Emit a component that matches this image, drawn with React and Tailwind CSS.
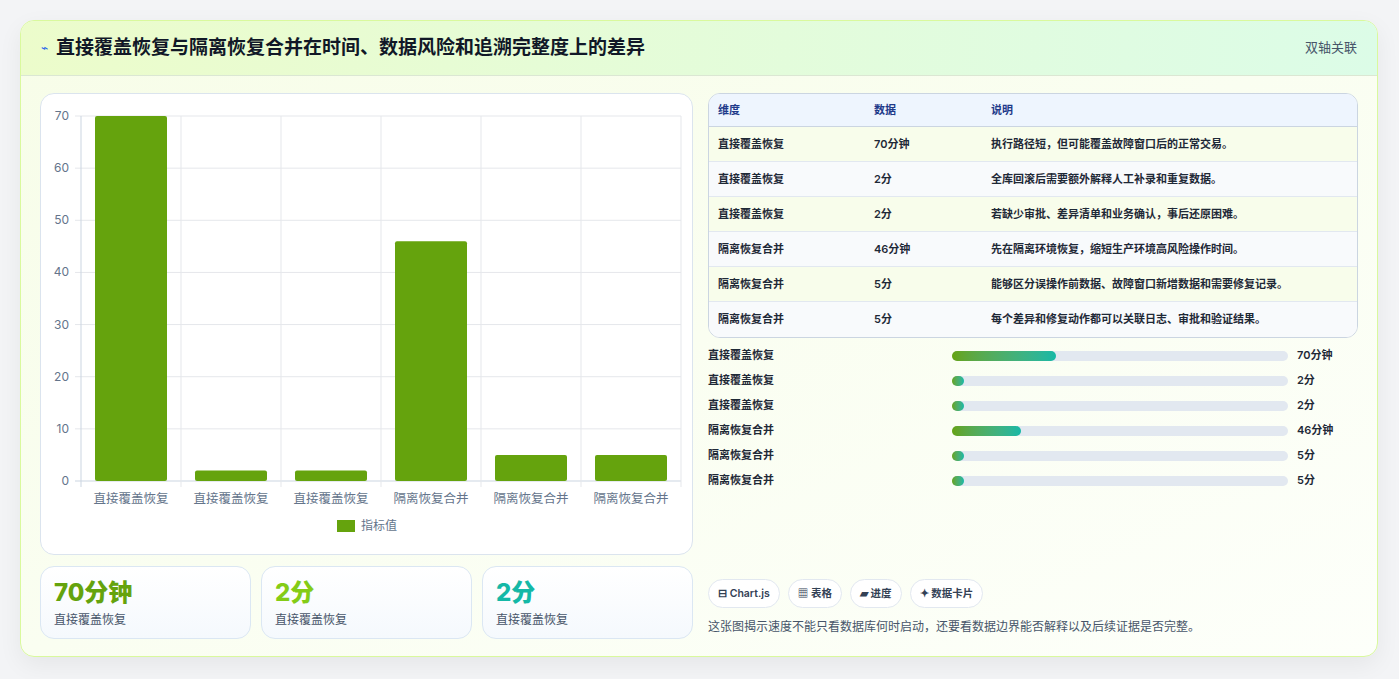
import React from "react";

const rows = [
  ["直接覆盖恢复", "70分钟", "执行路径短，但可能覆盖故障窗口后的正常交易。", 70],
  ["直接覆盖恢复", "2分", "全库回滚后需要额外解释人工补录和重复数据。", 2],
  ["直接覆盖恢复", "2分", "若缺少审批、差异清单和业务确认，事后还原困难。", 2],
  ["隔离恢复合并", "46分钟", "先在隔离环境恢复，缩短生产环境高风险操作时间。", 46],
  ["隔离恢复合并", "5分", "能够区分误操作前数据、故障窗口新增数据和需要修复记录。", 5],
  ["隔离恢复合并", "5分", "每个差异和修复动作都可以关联日志、审批和验证结果。", 5],
];

function Chart() {
  const x0 = 40, y0 = 22, h = 365, w = 600;
  const ticks = [0, 10, 20, 30, 40, 50, 60, 70];
  const yOf = (v) => y0 + h - (v / 70) * h;
  return (
    <svg width="652" height="460" className="block">
      {ticks.map((t) => (
        <g key={t}>
          <line x1={x0 - 6} x2={x0 + w} y1={yOf(t)} y2={yOf(t)} stroke={t === 0 ? "#cbd5e1" : "#e5e7eb"} />
          <text x={x0 - 12} y={yOf(t) + 4} textAnchor="end" fontSize="12" fill="#64748b">{t}</text>
        </g>
      ))}
      {[0, 1, 2, 3, 4, 5, 6].map((i) => (
        <line key={i} x1={x0 + i * 100} x2={x0 + i * 100} y1={y0} y2={y0 + h + 6} stroke={i === 0 ? "#cbd5e1" : "#e5e7eb"} />
      ))}
      {rows.map((r, i) => (
        <g key={i}>
          <rect x={x0 + i * 100 + 14} y={yOf(r[3])} width="72" height={(r[3] / 70) * h} rx="2" fill="#65a30d" />
          <text x={x0 + i * 100 + 50} y={y0 + h + 22} textAnchor="middle" fontSize="12.5" fill="#64748b">{r[0]}</text>
        </g>
      ))}
      <rect x="296" y="426" width="18" height="12" fill="#65a30d" />
      <text x="320" y="436" fontSize="12" fill="#64748b">指标值</text>
    </svg>
  );
}

export default function App() {
  const pct = { 70: 31, 46: 20.5, 2: 3.5, 5: 3.5 };
  return (
    <div className="w-[1399px] h-[679px] bg-[#f3f4f6] pt-[20px] pl-[20px]" style={{ fontFamily: "Inter, 'Noto Sans CJK SC', sans-serif" }}>
      <div className="w-[1358px] h-[637px] rounded-[14px] border border-[#d9f99d] bg-gradient-to-br from-[#f7fde8] to-[#fdfffa] shadow-[0_8px_24px_rgba(0,0,0,0.06)] overflow-hidden">
        <div className="h-[55px] flex items-center justify-between px-[20px] bg-gradient-to-r from-[#ecfccb] to-[#dcfce7] border-b border-[#dbe7d3]">
          <div className="flex items-center gap-[8px]">
            <span className="text-[#2563eb] text-[12px]">⌁</span>
            <span className="text-[19px] font-bold text-[#111827]">直接覆盖恢复与隔离恢复合并在时间、数据风险和追溯完整度上的差异</span>
          </div>
          <span className="text-[13px] text-[#475569]">双轴关联</span>
        </div>
        <div className="flex gap-[15px] px-[19px] pt-[17px]">
          <div className="w-[653px] flex flex-col gap-[11px]">
            <div className="h-[462px] rounded-[14px] border border-[#dbe4ee] bg-white">
              <Chart />
            </div>
            <div className="flex gap-[10px]">
              {[["70分钟", "text-[#65a30d]"], ["2分", "text-[#84cc16]"], ["2分", "text-[#14b8a6]"]].map(([v, c], i) => (
                <div key={i} className="flex-1 h-[73px] rounded-[14px] border border-[#dbe7f3] bg-gradient-to-b from-white to-[#f5f9fd] px-[13px] pt-[10px]">
                  <div className={`text-[24px] font-extrabold leading-[32px] ${c}`}>{v}</div>
                  <div className="text-[12px] text-[#475569] mt-[2px]">直接覆盖恢复</div>
                </div>
              ))}
            </div>
          </div>
          <div className="w-[653px] flex flex-col">
            <div className="rounded-[12px] border border-[#cbd5e1] overflow-hidden bg-white">
              <div className="h-[33px] flex items-center bg-[#eef5fe] border-b border-[#cbd5e1] text-[11px] font-semibold text-[#1e3a8a]">
                <span className="w-[165px] pl-[9px]">维度</span>
                <span className="w-[117px]">数据</span>
                <span>说明</span>
              </div>
              {rows.map((r, i) => (
                <div key={i} className={`h-[35px] flex items-center text-[11px] font-semibold text-[#1f2937] ${i < 5 ? "border-b border-[#e2e8f0]" : ""} ${i % 2 === 0 ? "bg-[#f8fdeb]" : "bg-[#f8fafc]"}`}>
                  <span className="w-[165px] pl-[9px]">{r[0]}</span>
                  <span className="w-[117px]">{r[1]}</span>
                  <span>{r[2]}</span>
                </div>
              ))}
            </div>
            <div className="mt-[5px] flex flex-col">
              {rows.map((r, i) => (
                <div key={i} className="h-[25px] flex items-center text-[11px] font-semibold text-[#1f2937]">
                  <span className="w-[244px]">{r[0]}</span>
                  <div className="w-[336px] h-[10px] rounded-full bg-[#e2e8f0]">
                    <div className="h-full rounded-full bg-gradient-to-r from-[#65a30d] to-[#14b8a6]" style={{ width: pct[r[3]] + "%" }} />
                  </div>
                  <span className="ml-[9px]">{r[1]}</span>
                </div>
              ))}
            </div>
            <div className="mt-auto flex gap-[8px]">
              {["⊟ Chart.js", "▦ 表格", "▰ 进度", "✦ 数据卡片"].map((t) => (
                <span key={t} className="h-[29px] px-[9px] flex items-center rounded-full border border-[#e2e8f0] bg-white text-[10.5px] font-semibold text-[#334155]">{t}</span>
              ))}
            </div>
            <div className="mt-[10px] text-[12px] text-[#475569] mb-[3px]">这张图揭示速度不能只看数据库何时启动，还要看数据边界能否解释以及后续证据是否完整。</div>
          </div>
        </div>
      </div>
    </div>
  );
}
